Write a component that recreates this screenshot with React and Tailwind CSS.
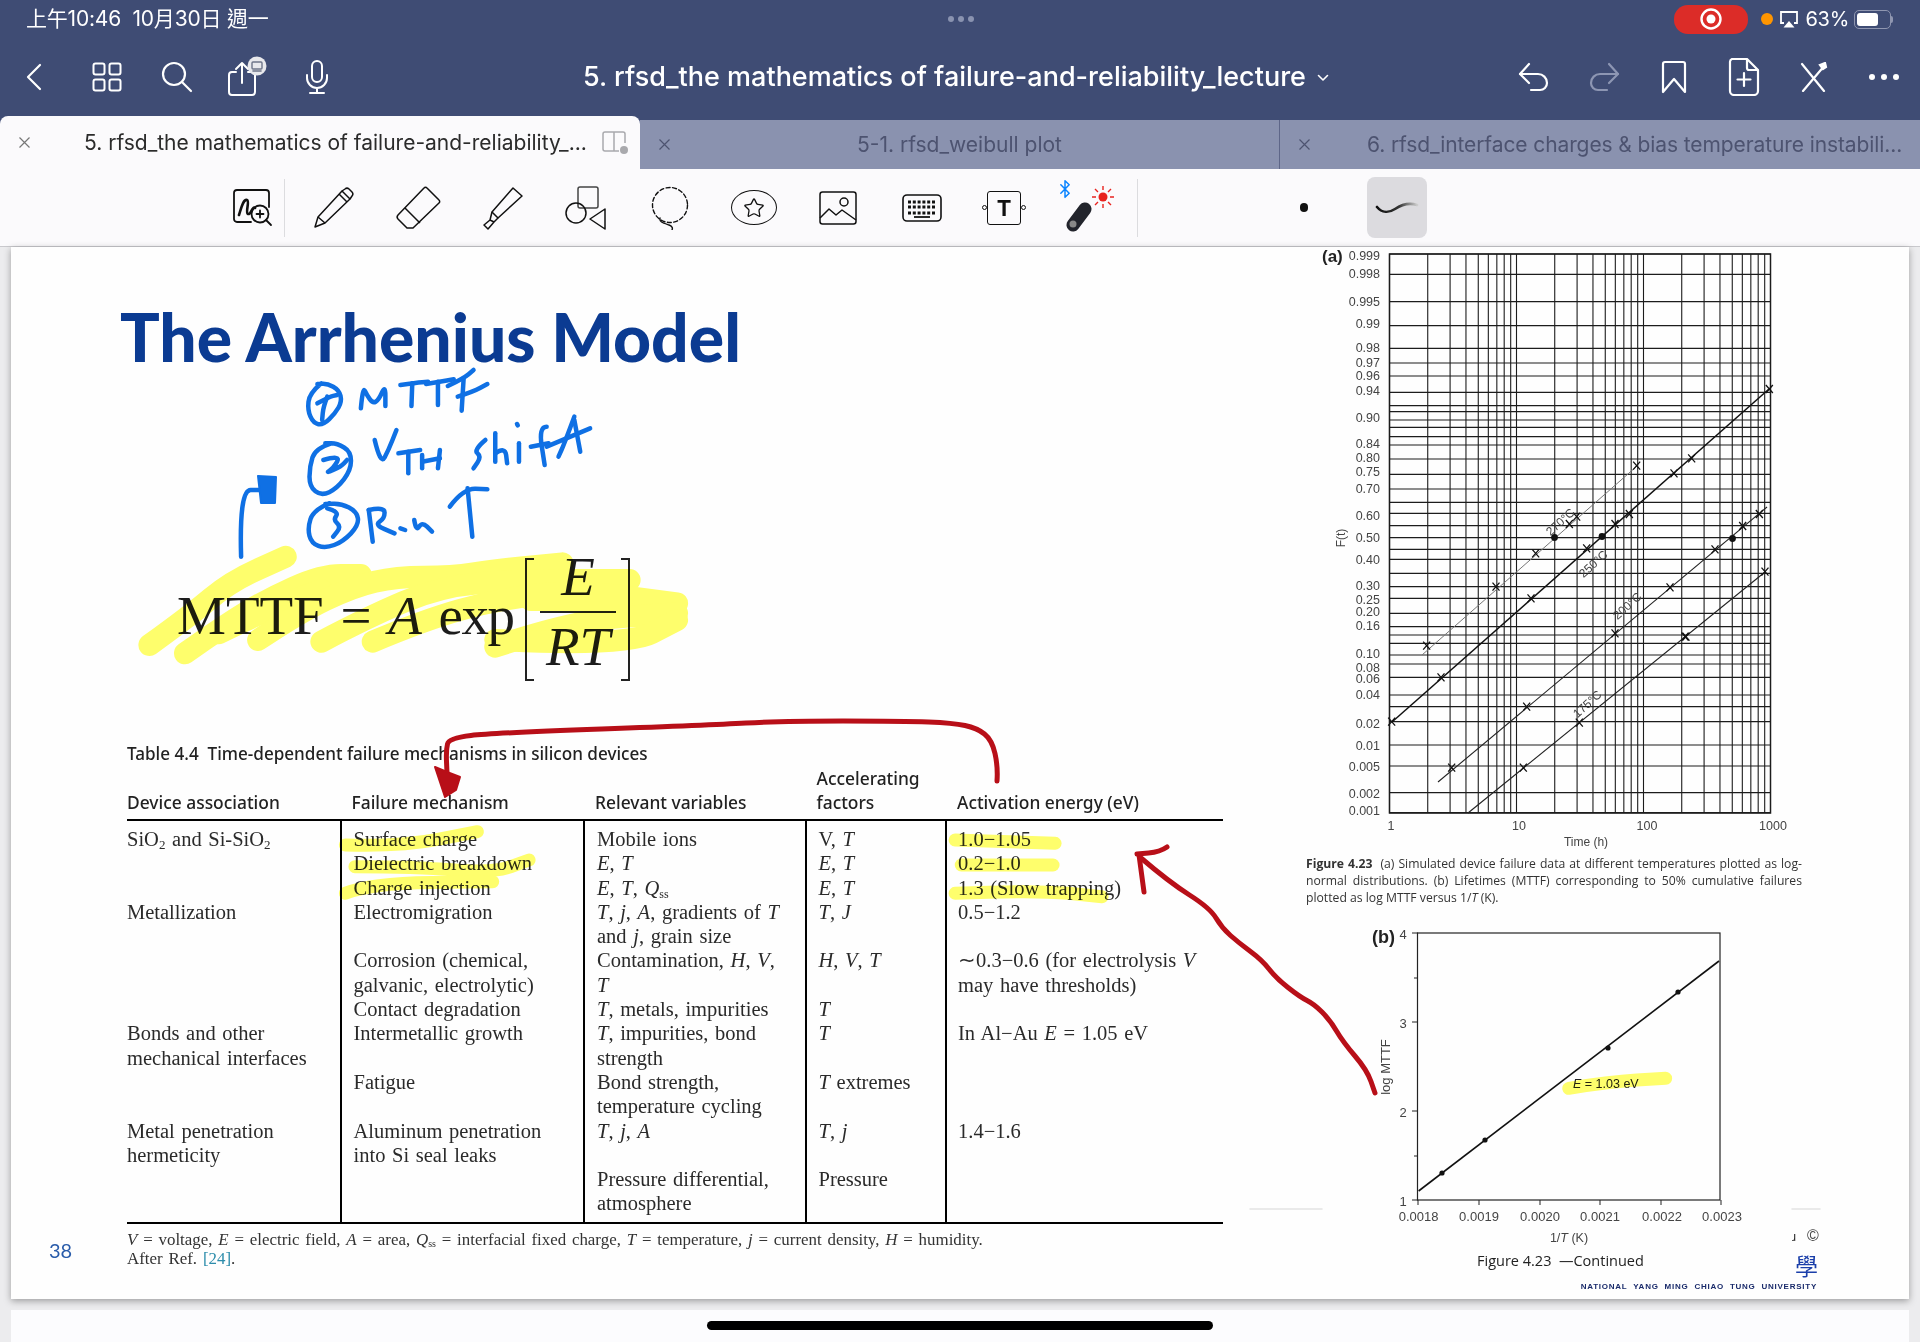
import { Star, Bluetooth } from 'lucide-react';

const sans = "font-['Inter','Noto_Sans_CJK_TC',sans-serif]";
const serif = "font-['Liberation_Serif',serif]";
const book = "font-['Open_Sans',sans-serif]";
const head = "font-['Noto_Sans',sans-serif]";

// turns a list of points into a soft pen stroke
const curve = (pts, map) => {
  const p = pts.map(map);
  if (p.length < 3) return `M${p.map((q) => q.join(' ')).join(' L')}`;
  let d = `M${p[0].join(' ')}`;
  for (let i = 1; i < p.length - 1; i++) {
    const mx = (p[i][0] + p[i + 1][0]) / 2;
    const my = (p[i][1] + p[i + 1][1]) / 2;
    d += ` Q${p[i].join(' ')} ${mx} ${my}`;
  }
  return `${d} L${p[p.length - 1].join(' ')}`;
};

const same = ([x, y]) => [x, y];
const z3 = ([x, y]) => [100 + x / 2.53, 280 + y / 3];
const z4 = ([x, y]) => [110 + x / 2.613, 710 + y / 3];
const z5 = ([x, y]) => [700 + x / 2.45, 710 + y / 3];
const z8 = ([x, y]) => [1300 + x / 2.53, 910 + y / 3];

const blueInk = [
  [[560, 310], [530, 340], [525, 390], [540, 430], [565, 435], [595, 400], [612, 365], [605, 330], [575, 310], [550, 312]],
  [[550, 370], [580, 350], [600, 345]],
  [[575, 350], [565, 380], [562, 420]],
  [[660, 385], [665, 320], [675, 345], [690, 370], [705, 360], [722, 315], [722, 378]],
  [[760, 315], [800, 308], [830, 305]],
  [[790, 310], [788, 378]],
  [[825, 312], [860, 305], [895, 298]],
  [[855, 305], [855, 375]],
  [[880, 318], [920, 295], [945, 270]],
  [[920, 295], [915, 392]],
  [[905, 350], [945, 335], [980, 312]],
  [[585, 490], [545, 505], [530, 560], [530, 620], [560, 648], [600, 625], [635, 570], [635, 515], [600, 490], [570, 490]],
  [[565, 540], [610, 525], [590, 565], [570, 580], [610, 560], [625, 540]],
  [[695, 480], [710, 555], [730, 510], [750, 450]],
  [[755, 520], [810, 510]],
  [[780, 515], [780, 580]],
  [[815, 525], [815, 565]],
  [[815, 545], [860, 535]],
  [[860, 510], [855, 565]],
  [[975, 480], [945, 510], [965, 530], [945, 565]],
  [[1000, 460], [1000, 545]],
  [[1000, 520], [1025, 500], [1030, 550]],
  [[1060, 490], [1060, 545]],
  [[1055, 432], [1057, 436]],
  [[1130, 440], [1110, 440], [1125, 555]],
  [[1090, 500], [1135, 490]],
  [[1200, 410], [1175, 490], [1160, 530]],
  [[1200, 420], [1215, 515]],
  [[1130, 500], [1240, 445]],
  [[580, 670], [540, 690], [525, 745], [535, 790], [570, 805], [615, 785], [655, 735], [650, 695], [610, 670], [570, 672]],
  [[575, 685], [605, 695], [590, 720], [610, 740], [590, 770]],
  [[680, 690], [690, 785]],
  [[680, 690], [720, 680], [720, 715], [695, 735], [745, 760]],
  [[760, 745], [772, 750]],
  [[795, 720], [800, 755], [815, 725], [840, 755]],
  [[885, 680], [920, 625], [980, 628]],
  [[930, 625], [942, 770]],
  [[357, 830], [352, 630], [410, 630]],
];

const yellowBig = [
  [[125, 1095], [230, 1005], [330, 905], [470, 830]],
  [[215, 1120], [310, 1040], [420, 960], [560, 885], [660, 885]],
  [[300, 1060], [420, 990], [560, 930]],
  [[400, 1080], [500, 1000], [640, 920], [750, 890], [890, 890], [1000, 870], [1170, 850]],
  [[560, 1085], [680, 1010], [860, 920], [1050, 900], [1340, 900]],
  [[690, 1085], [820, 1020], [1000, 960], [1200, 930], [1460, 970]],
  [[1000, 1100], [1200, 1020], [1460, 1000]],
  [[1000, 1080], [1330, 1100], [1460, 1020]],
  [[1090, 960], [1320, 960]],
];

const HighlightLayer = () => (
  <svg className="absolute left-0 top-0 pointer-events-none mix-blend-multiply" width="1920" height="1342" fill="none" stroke="#ffff6c" strokeLinecap="round" strokeLinejoin="round">
    {yellowBig.map((s, i) => (
      <path key={i} d={curve(s, z3)} strokeWidth="22" />
    ))}
    <path d={curve([[615, 405], [760, 410], [960, 365]], z4)} strokeWidth="13" />
    <path d={curve([[640, 470], [800, 470], [1000, 490], [1095, 450]], z4)} strokeWidth="13" />
    <path d={curve([[615, 550], [680, 520], [1000, 515]], z4)} strokeWidth="13" />
    <path d={curve([[625, 390], [870, 400]], z5)} strokeWidth="13" />
    <path d={curve([[640, 465], [865, 465]], z5)} strokeWidth="13" />
    <path d={curve([[625, 550], [820, 540], [985, 560]], z5)} strokeWidth="13" />
    <path d={curve([[680, 535], [780, 515], [925, 505]], z8)} strokeWidth="13" />
  </svg>
);

const InkLayer = () => (
  <svg className="absolute left-0 top-0 pointer-events-none" width="1920" height="1342" fill="none" strokeLinecap="round" strokeLinejoin="round">
    <g stroke="#0f70e4" strokeWidth="4.5">
      {blueInk.map((s, i) => (
        <path key={i} d={curve(s, z3)} />
      ))}
    </g>
    <polygon points="258,476 276,477 275,503 261,503" fill="#0f70e4" stroke="#0f70e4" strokeWidth="2" />
    <g stroke="#b80f18" strokeWidth="5">
      <path d={curve([[997, 781], [998, 767], [992, 740], [977, 728], [953, 723], [904, 721], [782, 721], [710, 725], [493, 733], [449, 738], [446, 750], [447, 773]], same)} />
      <path d={curve([[1167, 847], [1160, 852], [1137, 854]], same)} />
      <path d={curve([[1139, 855], [1144, 892]], same)} />
      <path d={curve([[1141, 858], [1169, 882], [1210, 908], [1222, 928], [1239, 943], [1262, 960], [1276, 978], [1300, 997], [1314, 1004], [1330, 1020], [1343, 1042], [1367, 1070], [1375, 1093]], same)} />
    </g>
    <polygon points="435,767 447,772 460,777 456,790 445,797 440,782" fill="#b80f18" stroke="#b80f18" strokeWidth="2" />
    <g stroke="#e4e4e4" strokeWidth="1.5">
      <path d="M1250 1209H1322" />
      <path d="M1792 1209H1820" />
    </g>
  </svg>
);

const yLabels = [
  ['0.999', 256], ['0.998', 274], ['0.995', 302], ['0.99', 324], ['0.98', 348], ['0.97', 363], ['0.96', 376], ['0.94', 391],
  ['0.90', 418], ['0.84', 444], ['0.80', 458], ['0.75', 472], ['0.70', 489], ['0.60', 516], ['0.50', 538], ['0.40', 560],
  ['0.30', 586], ['0.25', 600], ['0.20', 612], ['0.16', 626], ['0.10', 654], ['0.08', 668], ['0.06', 679], ['0.04', 695],
  ['0.02', 724], ['0.01', 746], ['0.005', 767], ['0.002', 794], ['0.001', 811],
];
const hLines = [
  ...[42, 103, 185, 257, 325, 369, 408, 457, 497, 515, 540, 562, 590, 615, 657, 703, 747, 787, 820, 857, 893, 928, 958, 1000, 1040, 1075].map((z) => 240 + z / 3),
  ...[40, 80, 105, 130, 165, 192, 232, 285, 320, 365, 435, 498, 578, 638].map((z) => 600 + z / 3),
];
const vLines = [];
for (let d = 0; d < 3; d++) {
  for (let n = 1; n < 10; n++) vLines.push(1389.5 + 127 * (d + Math.log10(n)));
}
const z6 = ([x, y]) => [1300 + x / 3, 240 + y / 3];
const z7 = ([x, y]) => [1300 + x / 3, 600 + y / 3];
const crosses = [
  ...[[1010, 677], [830, 830], [808, 852], [707, 940], [588, 1040], [1408, 447], [1175, 655], [1122, 700], [988, 822], [945, 852], [860, 925], [693, 1075], [1378, 822], [1328, 858], [1245, 928], [1110, 1042], [945, 1180], [1395, 995], [1155, 1190]].map(z6),
  ...[[380, 137], [423, 232], [275, 365], [680, 320], [455, 503], [1158, 110], [838, 368], [670, 503]].map(z7),
];

const ChartA = () => (
  <svg className="block overflow-visible" width="520" height="608" viewBox="1306 247 520 608">
    <g stroke="#1c1c1c" strokeWidth="1.1">
      {hLines.map((y, i) => (
        <line key={i} x1="1389.5" x2="1770.5" y1={y} y2={y} />
      ))}
      {vLines.map((x, i) => (
        <line key={i} x1={x} x2={x} y1="254" y2="813" />
      ))}
      <rect x="1389.5" y="254" width="381" height="559" fill="none" strokeWidth="1.5" />
    </g>
    <line x1="1422" y1="655" x2="1637" y2="466" stroke="#777" strokeWidth="1" />
    <line x1="1392" y1="722" x2="1769" y2="389" stroke="#111" strokeWidth="1.5" />
    <line x1="1438" y1="782" x2="1767" y2="507" stroke="#222" strokeWidth="1.1" />
    <line x1="1468" y1="813" x2="1765" y2="572" stroke="#222" strokeWidth="1.1" />
    <g stroke="#111" strokeWidth="1.3">
      {crosses.map(([x, y], i) => (
        <path key={i} d={`M${x - 3.5} ${y - 4}L${x + 3.5} ${y + 4}M${x + 3.5} ${y - 4}L${x - 3.5} ${y + 4}`} />
      ))}
    </g>
    <circle cx="1554.5" cy="537.5" r="3.4" fill="#111" />
    <circle cx="1602" cy="536.5" r="3.4" fill="#111" />
    <circle cx="1732.5" cy="538.5" r="3.4" fill="#111" />
    <g className="font-['Liberation_Sans',sans-serif]" fill="#444" fontSize="12.5">
      {yLabels.map(([t, y]) => (
        <text key={t} x="1380" y={y + 3.5} textAnchor="end">{t}</text>
      ))}
      <text x="1391" y="830" textAnchor="middle">1</text>
      <text x="1519" y="830" textAnchor="middle">10</text>
      <text x="1647" y="830" textAnchor="middle">100</text>
      <text x="1773" y="830" textAnchor="middle">1000</text>
      <text x="1586" y="846" textAnchor="middle" fontSize="12">Time (h)</text>
      <text transform="translate(1345 538) rotate(-90)" textAnchor="middle" fontSize="12">F(t)</text>
      <text transform="translate(1563 525) rotate(-42)" textAnchor="middle" fontSize="12">270°C</text>
      <text transform="translate(1596 567) rotate(-42)" textAnchor="middle" fontSize="12">250°C</text>
      <text transform="translate(1630 609) rotate(-42)" textAnchor="middle" fontSize="12">200°C</text>
      <text transform="translate(1590 707) rotate(-42)" textAnchor="middle" fontSize="12">175°C</text>
      <text x="1322" y="262" fontSize="17" fontWeight="700" fill="#222">(a)</text>
    </g>
  </svg>
);

const ChartB = () => (
  <svg className="block" width="520" height="325" viewBox="1306 925 520 325">
    <rect x="1417.5" y="933" width="302.5" height="267" fill="none" stroke="#222" strokeWidth="1.2" />
    <line x1="1418.6" y1="1191" x2="1719" y2="961" stroke="#111" strokeWidth="1.6" />
    <g fill="#111">
      <circle cx="1442" cy="1173" r="2.6" />
      <circle cx="1485" cy="1140" r="2.6" />
      <circle cx="1608" cy="1048" r="2.6" />
      <circle cx="1678" cy="992" r="2.6" />
    </g>
    <g stroke="#222" strokeWidth="1">
      {[933, 1022, 1111, 1200].map((y) => <line key={y} x1="1412" x2="1418" y1={y} y2={y} />)}
      {[978, 1156].map((y) => <line key={y} x1="1414" x2="1418" y1={y} y2={y} />)}
      {[1418, 1479, 1540, 1600, 1661, 1721].map((x) => <line key={x} x1={x} x2={x} y1="1200" y2="1205" />)}
    </g>
    <g className="font-['Liberation_Sans',sans-serif]" fill="#444" fontSize="13">
      <text x="1403" y="939" textAnchor="middle">4</text>
      <text x="1403" y="1028" textAnchor="middle">3</text>
      <text x="1403" y="1117" textAnchor="middle">2</text>
      <text x="1403" y="1206" textAnchor="middle">1</text>
      {[['0.0018', 1418.6], ['0.0019', 1479], ['0.0020', 1540], ['0.0021', 1600], ['0.0022', 1662], ['0.0023', 1722]].map(([t, x]) => (
        <text key={t} x={x} y="1221" textAnchor="middle">{t}</text>
      ))}
      <text x="1569" y="1242" textAnchor="middle" fontSize="12.5">1/<tspan fontStyle="italic">T</tspan> (K)</text>
      <text transform="translate(1390 1067) rotate(-90)" textAnchor="middle" fontSize="13">log MTTF</text>
      <text x="1573" y="1088" fontSize="12.5" fill="#222"><tspan fontStyle="italic">E</tspan> = 1.03 eV</text>
      <text x="1372" y="943" fontSize="18" fontWeight="700" fill="#222">(b)</text>
      <text x="1813" y="1241" fontSize="16" textAnchor="middle">©</text>
      <text x="1794" y="1241" fontSize="12" textAnchor="middle" fill="#222">ɹ</text>
    </g>
  </svg>
);

const I = ({ children }) => <i>{children}</i>;

const columns = [
  ['w-[212.5px]', [
    <>SiO<sub className="text-[13px]">2</sub> and Si-SiO<sub className="text-[13px]">2</sub></>, null, null, 'Metallization', null, null, null, null,
    'Bonds and other', 'mechanical interfaces', null, null, 'Metal penetration', 'hermeticity', null, null,
  ]],
  ['w-[243.5px] border-l-2 border-black pl-[12px]', [
    'Surface charge', 'Dielectric breakdown', 'Charge injection', 'Electromigration', null, 'Corrosion (chemical,', 'galvanic, electrolytic)',
    'Contact degradation', 'Intermetallic growth', null, 'Fatigue', null, 'Aluminum penetration', 'into Si seal leaks', null, null,
  ]],
  ['w-[221.5px] border-l-2 border-black pl-[12px]', [
    'Mobile ions', <><I>E</I>, <I>T</I></>, <><I>E</I>, <I>T</I>, <I>Q</I><sub className="text-[12px]">ss</sub></>,
    <><I>T</I>, <I>j</I>, <I>A</I>, gradients of <I>T</I></>, <>and <I>j</I>, grain size</>, <>Contamination, <I>H</I>, <I>V</I>,</>, <I>T</I>,
    <><I>T</I>, metals, impurities</>, <><I>T</I>, impurities, bond</>, 'strength', 'Bond strength,', 'temperature cycling',
    <><I>T</I>, <I>j</I>, <I>A</I></>, null, 'Pressure differential,', 'atmosphere',
  ]],
  ['w-[140.5px] border-l-2 border-black pl-[12px]', [
    <>V, <I>T</I></>, <><I>E</I>, <I>T</I></>, <><I>E</I>, <I>T</I></>, <><I>T</I>, <I>J</I></>, null, <><I>H</I>, <I>V</I>, <I>T</I></>, null,
    <I>T</I>, <I>T</I>, null, <><I>T</I> extremes</>, null, <><I>T</I>, <I>j</I></>, null, 'Pressure', null,
  ]],
  ['flex-1 border-l-2 border-black pl-[11px]', [
    '1.0−1.05', '0.2−1.0', '1.3 (Slow trapping)', '0.5−1.2', null, <>∼0.3−0.6 (for electrolysis <I>V</I></>, 'may have thresholds)', null,
    <>In Al−Au <I>E</I> = 1.05 eV</>, null, null, null, '1.4−1.6', null, null, null,
  ]],
];

const headers = [
  ['w-[212.5px]', ['Device association']],
  ['w-[243.5px] pl-[12px]', ['Failure mechanism']],
  ['w-[221.5px] pl-[12px]', ['Relevant variables']],
  ['w-[140.5px] pl-[12px]', ['Accelerating', 'factors']],
  ['flex-1 pl-[12px]', ['Activation energy (eV)']],
];

const Table = () => (
  <div>
    <div className={`${head} font-medium text-[17.1px] text-[#222] leading-[24px] mt-[61px] whitespace-nowrap`}>
      Table 4.4&nbsp; Time-dependent failure mechanisms in silicon devices
    </div>
    <div className={`flex items-end mt-[1px] pb-[5px] border-b-2 border-black ${head} text-[17.4px] font-medium text-[#222] leading-[23.5px]`}>
      {headers.map(([cls, lines], i) => (
        <div key={i} className={cls}>
          {lines.map((t) => <div key={t}>{t}</div>)}
        </div>
      ))}
    </div>
    <div className={`flex pb-[6px] border-b-2 border-black ${serif} text-[20.5px] text-[#2a2a2a] [word-spacing:1.5px]`}>
      {columns.map(([cls, lines], i) => (
        <div key={i} className={`${cls} pt-[6px] -mb-[6px] pb-[6px]`}>
          {lines.map((t, j) => (
            <div key={j} className="h-[24.3px] leading-[24px] whitespace-nowrap">{t}</div>
          ))}
        </div>
      ))}
    </div>
    <div className={`${serif} mt-[6px] text-[16.9px] leading-[19px] text-[#333] [word-spacing:1.6px] whitespace-nowrap`}>
      <div>
        <I>V</I> = voltage, <I>E</I> = electric field, <I>A</I> = area, <I>Q</I><sub className="text-[10px]">ss</sub> = interfacial fixed charge, <I>T</I> = temperature, <I>j</I> = current density, <I>H</I> = humidity.
      </div>
      <div>After Ref. <span className="text-[#2c8cab]">[24]</span>.</div>
    </div>
  </div>
);

const Formula = () => (
  <div className={`flex items-center ml-[50px] mt-[186px] h-[123px] ${serif} text-[55px] text-[#1c1c1c]`}>
    <span className="leading-none pb-[8px] [word-spacing:3px]">MTTF = <i>A</i> <span className="tracking-[-1.5px]">exp</span></span>
    <div className="flex h-[123px] ml-[12px]">
      <div className="w-[9px] border-l-2 border-y-2 border-[#222]" />
      <div className="flex flex-col items-center w-[87px] italic leading-[55px]">
        <div className="h-[53px] leading-[38px]">E</div>
        <div className="w-[76px] h-[2px] bg-[#222]" />
        <div className="pt-[6px]">RT</div>
      </div>
      <div className="w-[9px] border-r-2 border-y-2 border-[#222]" />
    </div>
  </div>
);

const PdfPage = () => (
  <div className="mx-[11px] h-[1052px] bg-[#fefefe] flex shadow-[0_2px_7px_rgba(0,0,0,0.35)]">
    <div className="w-[116px] flex flex-col justify-end pl-[38px] pb-[34px]">
      <span className="font-['Lato',sans-serif] text-[20px] text-[#2a5caa]">38</span>
    </div>
    <div className="w-[1096px]">
      <h1 className="font-['Lato',sans-serif] font-black text-[66px] leading-[70px] text-[#0b3b92] -ml-[7px] mt-[55px] whitespace-nowrap">
        The Arrhenius Model
      </h1>
      <Formula />
      <Table />
    </div>
    <div className="flex-1 pl-[83px]">
      <ChartA />
      <div className={`${book} w-[496px] text-[12.2px] leading-[17px] text-[#333] whitespace-nowrap`}>
        <div className="[text-align-last:justify]"><span className="font-bold">Figure 4.23</span>&nbsp; (a) Simulated device failure data at different temperatures plotted as log-</div>
        <div className="[text-align-last:justify]">normal distributions. (b) Lifetimes (MTTF) corresponding to 50% cumulative failures</div>
        <div>plotted as log MTTF versus 1/<I>T</I> (K).</div>
      </div>
      <div className="mt-[19px]">
        <ChartB />
      </div>
      <div className="flex h-[26px] w-[512px]">
        <span className={`${book} pl-[171px] text-[14.5px] leading-[22px] text-[#222]`}>Figure 4.23 &nbsp;—Continued</span>
        <span className="ml-auto font-['Noto_Sans_CJK_TC',sans-serif] text-[23px] leading-[30px] text-[#1b3faa]">學</span>
      </div>
      <div className="w-[511px] mt-[5px] flex justify-end font-['Liberation_Sans',sans-serif] font-bold text-[8px] leading-[12px] tracking-[0.75px] text-[#1a2b6b] whitespace-nowrap">
        NATIONAL&nbsp; YANG&nbsp; MING&nbsp; CHIAO&nbsp; TUNG&nbsp; UNIVERSITY
      </div>
    </div>
  </div>
);

const StatusBar = () => (
  <div className={`flex items-center h-[38px] pl-[26px] pr-[27px] text-white text-[21px] ${sans}`}>
    <span className="w-[922px] tracking-[-0.2px]">上午10:46 &nbsp;10月30日 週一</span>
    <div className="flex gap-[4px]">
      <span className="w-[6px] h-[6px] rounded-full bg-[#8a93b0]" />
      <span className="w-[6px] h-[6px] rounded-full bg-[#8a93b0]" />
      <span className="w-[6px] h-[6px] rounded-full bg-[#8a93b0]" />
    </div>
    <div className="ml-auto w-[74px] h-[29px] rounded-[14px] bg-[#dc2c28] flex items-center justify-center">
      <svg width="24" height="24" viewBox="0 0 24 24">
        <circle cx="12" cy="12" r="9.5" fill="none" stroke="#fff" strokeWidth="2.4" />
        <circle cx="12" cy="12" r="4.5" fill="#fff" />
      </svg>
    </div>
    <span className="ml-[13px] w-[12px] h-[12px] rounded-full bg-[#ff9500]" />
    <svg className="ml-[5px]" width="22" height="20" viewBox="0 0 22 20" fill="none" stroke="#fff" strokeWidth="1.8">
      <path d="M6 14H3V3h16v11h-3" />
      <path d="M11 12l5.5 6.5h-11z" fill="#fff" stroke="none" />
    </svg>
    <span className="ml-[6px] text-[20px] tracking-[-0.3px]">63%</span>
    <div className="ml-[5px] w-[37px] h-[19px] rounded-[5px] border border-[#8f96b0] p-[2px]">
      <div className="w-[21px] h-full rounded-[3px] bg-white" />
    </div>
    <span className="w-[2px] h-[7px] rounded-r bg-[#8f96b0]" />
  </div>
);

const NavSlot = ({ children }) => <div className="w-[70px] flex justify-center">{children}</div>;

const NavBar = () => (
  <div className={`flex items-center h-[78px] text-white ${sans}`}>
    <svg className="ml-[26px]" width="16" height="28" viewBox="0 0 16 28" fill="none" stroke="#fff" strokeWidth="2.2" strokeLinecap="round" strokeLinejoin="round">
      <path d="M14 2L2 14l12 12" />
    </svg>
    <svg className="ml-[50px]" width="30" height="30" viewBox="0 0 30 30" fill="none" stroke="#fff" strokeWidth="2">
      <rect x="1.5" y="1.5" width="11" height="11" rx="2" />
      <rect x="17.5" y="1.5" width="11" height="11" rx="2" />
      <rect x="1.5" y="17.5" width="11" height="11" rx="2" />
      <rect x="17.5" y="17.5" width="11" height="11" rx="2" />
    </svg>
    <svg className="ml-[39px]" width="32" height="32" viewBox="0 0 32 32" fill="none" stroke="#fff" strokeWidth="2.2" strokeLinecap="round">
      <circle cx="13" cy="13" r="11" />
      <path d="M21 21l9 9" />
    </svg>
    <svg className="ml-[33px]" width="42" height="42" viewBox="0 0 42 42" fill="none" stroke="#fff" strokeWidth="2" strokeLinecap="round" strokeLinejoin="round">
      <path d="M10 16H6a3 3 0 0 0-3 3v17a3 3 0 0 0 3 3h20a3 3 0 0 0 3-3V19a3 3 0 0 0-3-3h-4" />
      <path d="M16 27V7M10 13l6-6 6 6" />
      <circle cx="31" cy="10" r="9.5" fill="#e8e8ec" stroke="none" />
      <rect x="26" y="6" width="10" height="7" rx="1" stroke="#6d7488" strokeWidth="1.4" />
      <path d="M27 15h8" stroke="#6d7488" strokeWidth="1.6" />
    </svg>
    <svg className="ml-[36px]" width="26" height="36" viewBox="0 0 26 36" fill="none" stroke="#fff" strokeWidth="2" strokeLinecap="round">
      <rect x="8" y="2" width="10" height="21" rx="5" />
      <path d="M3 16v3a10 10 0 0 0 20 0v-3M13 29v5M6 34h14" />
    </svg>
    <span className="ml-[253px] text-[27px] font-medium whitespace-nowrap">5. rfsd_the mathematics of failure-and-reliability_lecture</span>
    <svg className="ml-[11px] mt-[2px]" width="12" height="8" viewBox="0 0 12 8" fill="none" stroke="#fff" strokeWidth="1.6" strokeLinecap="round" strokeLinejoin="round">
      <path d="M1.5 1.5L6 6l4.5-4.5" />
    </svg>
    <div className="ml-auto flex items-center pr-px">
      <NavSlot>
        <svg width="32" height="32" viewBox="0 0 32 32" fill="none" stroke="#fff" strokeWidth="2.2" strokeLinecap="round" strokeLinejoin="round">
          <path d="M11 3L2 13l9 9" />
          <path d="M2 13h18a9 9 0 0 1 9 9 7 7 0 0 1-7 7h-9" />
        </svg>
      </NavSlot>
      <NavSlot>
        <svg width="32" height="32" viewBox="0 0 32 32" fill="none" stroke="#8d96b3" strokeWidth="2.2" strokeLinecap="round" strokeLinejoin="round">
          <path d="M21 3l9 10-9 9" />
          <path d="M30 13H12a9 9 0 0 0-9 9 7 7 0 0 0 7 7h9" />
        </svg>
      </NavSlot>
      <NavSlot>
        <svg width="26" height="34" viewBox="0 0 26 34" fill="none" stroke="#fff" strokeWidth="2.2" strokeLinejoin="round">
          <path d="M2 4a2 2 0 0 1 2-2h18a2 2 0 0 1 2 2v28l-11-13L2 32z" />
        </svg>
      </NavSlot>
      <NavSlot>
        <svg width="32" height="38" viewBox="0 0 32 38" fill="none" stroke="#fff" strokeWidth="2.2" strokeLinecap="round" strokeLinejoin="round">
          <path d="M4 1h15l11 11v21a4 4 0 0 1-4 4H6a4 4 0 0 1-4-4V4a3 3 0 0 1 2-3z" />
          <path d="M19 2v8a2 2 0 0 0 2 2h8M16 15v13M9.500 21.500h13" />
        </svg>
      </NavSlot>
      <NavSlot>
        <svg width="28" height="30" viewBox="0 0 28 30" fill="none" stroke="#fff" strokeWidth="2.2" strokeLinecap="round">
          <path d="M2 2l22 27" />
          <path d="M25 3L3 29" />
          <path d="M20 3l5-2 1 4-3 2z" fill="#fff" />
        </svg>
      </NavSlot>
      <NavSlot>
        <div className="flex gap-[6px]">
          <span className="w-[6px] h-[6px] rounded-full bg-white" />
          <span className="w-[6px] h-[6px] rounded-full bg-white" />
          <span className="w-[6px] h-[6px] rounded-full bg-white" />
        </div>
      </NavSlot>
    </div>
  </div>
);

const CloseX = ({ color }) => (
  <svg width="11" height="11" viewBox="0 0 11 11" fill="none" stroke={color} strokeWidth="1.2">
    <path d="M0.500 0.500l10 10M10.500 0.500l-10 10" />
  </svg>
);

const Tabs = () => (
  <div className={`flex h-[53px] text-[21px] ${sans} whitespace-nowrap`}>
    <div className="w-[640px] bg-[#fbfafc] rounded-t-[8px] flex items-center pl-[19px] text-[#2b2b2b]">
      <CloseX color="#777" />
      <span className="ml-[54px]">5. rfsd_the mathematics of failure-and-reliability_...</span>
      <svg className="ml-[15px]" width="28" height="24" viewBox="0 0 28 24" fill="none" stroke="#a9a9ad" strokeWidth="1.5">
        <path d="M17 20H3a2 2 0 0 1-2-2V3a2 2 0 0 1 2-2h18a2 2 0 0 1 2 2v9M12 1v19" />
        <circle cx="22" cy="19" r="4" fill="#a9a9ad" stroke="none" />
      </svg>
    </div>
    <div className="flex flex-1 self-end h-[49px] bg-[#8a92af] text-[#4d5370]">
      <div className="w-[639px] relative flex items-center justify-center">
        <span className="absolute left-[19px]"><CloseX color="#4d5370" /></span>
        <span>5-1. rfsd_weibull plot</span>
      </div>
      <div className="flex-1 border-l border-[#5e6688] flex items-center pl-[19px]">
        <CloseX color="#4d5370" />
        <span className="ml-[57px] tracking-[-0.1px]">6. rfsd_interface charges &amp; bias temperature instabili...</span>
      </div>
    </div>
  </div>
);

const Tool = ({ children }) => <div className="w-[84px] flex justify-center">{children}</div>;

const Toolbar = () => (
  <div className="flex items-center h-[78px] pl-[233px] bg-[#fbfafc] border-b border-[#c9c9cd]">
    <div className="w-[51px]">
      <svg width="40" height="38" viewBox="0 0 40 38" fill="none" stroke="#111" strokeWidth="1.8" strokeLinecap="round">
        <path d="M18 33H4a3 3 0 0 1-3-3V4a3 3 0 0 1 3-3h29a3 3 0 0 1 3 3v14" />
        <path d="M6 26c2-6 4-16 8-15 3 1-2 13 1 14s4-8 7-6" strokeWidth="2.6" />
        <circle cx="27" cy="25" r="8.500" />
        <path d="M33 31l5 5M27 21.500v7M23.500 25h7" />
      </svg>
    </div>
    <div className="w-px h-[58px] bg-[#dcdcdf]" />
    <div className="ml-[7px] flex items-center">
      <Tool>
        <svg width="42" height="42" viewBox="0 0 42 42" fill="none" stroke="#111" strokeWidth="1.5" strokeLinejoin="round">
          <path d="M2 40l3-10L29 4l8 8-25 24z" />
          <path d="M5 30l7 6M29 4l3-2a3 3 0 0 1 4 0l3 3a3 3 0 0 1 0 4l-2 3M26 7l8 8" />
        </svg>
      </Tool>
      <Tool>
        <svg width="46" height="44" viewBox="0 0 46 44" fill="none" stroke="#111" strokeWidth="1.5" strokeLinejoin="round">
          <path d="M3 29L29 2a2 2 0 0 1 3 0l12 12a2 2 0 0 1 0 3L18 42h-6l-9-9a3 3 0 0 1 0-4z" />
          <path d="M10 22l15 15" />
        </svg>
      </Tool>
      <Tool>
        <svg width="42" height="44" viewBox="0 0 42 44" fill="none" stroke="#111" strokeWidth="1.5" strokeLinejoin="round">
          <path d="M11 26L32 2l9 8-24 22z" />
          <path d="M11 26l-2 8 4 2 4-4M9 34l-6 5 4 4 6-7" />
        </svg>
      </Tool>
      <Tool>
        <svg width="42" height="44" viewBox="0 0 42 44" fill="none" stroke="#111" strokeWidth="1.5" strokeLinejoin="round">
          <rect x="13" y="1" width="20" height="21" rx="2" stroke="#444" />
          <circle cx="11" cy="27" r="10" />
          <path d="M40 23L25 33l15 10z" />
        </svg>
      </Tool>
      <Tool>
        <svg width="38" height="44" viewBox="0 0 38 44" fill="none" stroke="#111" strokeWidth="1.4" strokeDasharray="4 2.5" strokeLinecap="round">
          <circle cx="19" cy="19" r="17.500" />
          <path d="M9 32c-1 4 3 5 9 7 3 1 4 3 3 5" strokeDasharray="none" />
        </svg>
      </Tool>
      <Tool>
        <div className="w-[46px] h-[35px] rounded-[50%] border-[1.5px] border-[#111] flex items-center justify-center">
          <Star size={22} strokeWidth={1.4} color="#111" />
        </div>
      </Tool>
      <Tool>
        <svg width="38" height="34" viewBox="0 0 38 34" fill="none" stroke="#111" strokeWidth="1.5" strokeLinejoin="round">
          <rect x="1" y="1" width="36" height="32" rx="2.500" />
          <circle cx="25" cy="11" r="4" />
          <path d="M1 27l9-9 7 6 6-5 14 10" />
        </svg>
      </Tool>
      <Tool>
        <svg width="40" height="28" viewBox="0 0 40 28" fill="none" stroke="#111" strokeWidth="1.6">
          <rect x="1" y="1" width="38" height="26" rx="4" />
          <path d="M6 8h28M6 13h28" strokeWidth="3" strokeDasharray="3 1.800" />
          <path d="M6 19h28" strokeWidth="3" strokeDasharray="3 1.800" />
          <path d="M12 23h16" strokeWidth="1.8" />
        </svg>
      </Tool>
      <Tool>
        <div className="flex items-center -ml-[4px]">
          <span className="w-[5px] h-[5px] rounded-full border border-[#111]" />
          <div className="w-[34px] h-[34px] rounded-[3px] border-[1.5px] border-[#111] flex items-center justify-center font-['Inter',sans-serif] font-bold text-[22px] leading-none text-[#111]">T</div>
          <span className="w-[5px] h-[5px] rounded-full border border-[#111]" />
        </div>
      </Tool>
      <Tool>
        <div className="relative w-[56px] h-[50px] -ml-[6px]">
          <svg className="absolute left-0 top-0" width="56" height="50" viewBox="0 0 56 50" fill="none">
            <path d="M14 42L26 26" stroke="#22242c" strokeWidth="13" strokeLinecap="round" />
            <circle cx="14" cy="41" r="3.500" fill="#888" />
            <circle cx="44" cy="14" r="4.500" fill="#e8231f" />
            <path d="M44 3v4M44 21v4M33 14h4M51 14h4M36 6l3 3M49 19l3 3M52 6l-3 3M39 19l-3 3" stroke="#e8231f" strokeWidth="1.4" />
          </svg>
          <Bluetooth className="absolute -left-[4px] -top-[4px]" size={20} color="#0a84ff" strokeWidth={1.8} />
        </div>
      </Tool>
    </div>
    <div className="ml-[5px] w-px h-[58px] bg-[#dcdcdf]" />
    <span className="ml-[162px] w-[8px] h-[9px] rounded-full bg-[#111]" />
    <div className="ml-[59px] w-[60px] h-[61px] rounded-[8px] bg-[#dcdbdf] flex items-center justify-center">
      <svg width="44" height="14" viewBox="0 0 44 14" fill="none" strokeLinecap="round">
        <defs>
          <linearGradient id="stroke-fade" x1="0" x2="1" y1="0" y2="0">
            <stop offset="0" stopColor="#111" />
            <stop offset="0.55" stopColor="#333" />
            <stop offset="1" stopColor="#ccc" />
          </linearGradient>
        </defs>
        <path d="M2 6c5 6 12 6 18 2s13-7 22-4" stroke="url(#stroke-fade)" strokeWidth="2.6" />
      </svg>
    </div>
  </div>
);

export default function App() {
  return (
    <div className="relative w-[1920px] h-[1342px] overflow-hidden bg-[#ececee]">
      <div className="bg-[#3f4c74]">
        <StatusBar />
        <NavBar />
        <Tabs />
      </div>
      <Toolbar />
      <PdfPage />
      <div className="mx-[11px] mt-[11px] h-[40px] bg-[#fcfcfe]" />
      <HighlightLayer />
      <InkLayer />
      <div className="absolute left-[707px] top-[1321px] w-[506px] h-[9px] rounded-full bg-black" />
    </div>
  );
}
